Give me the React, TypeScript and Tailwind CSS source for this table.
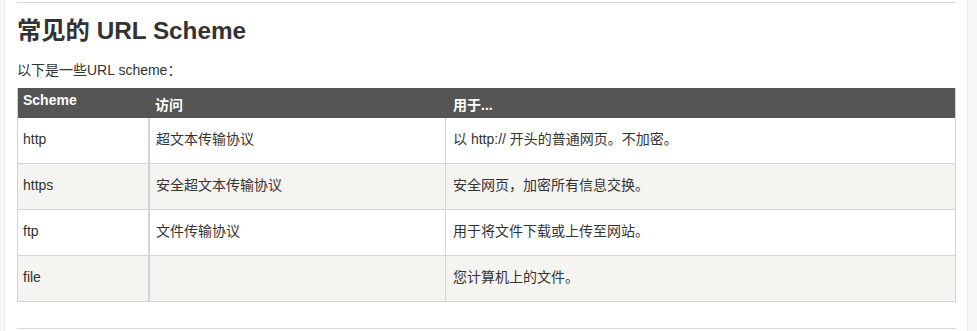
import React from "react";

const rows = [
  { s: "http", a: "超文本传输协议", u: "以 http:// 开头的普通网页。不加密。" },
  { s: "https", a: "安全超文本传输协议", u: "安全网页，加密所有信息交换。" },
  { s: "ftp", a: "文件传输协议", u: "用于将文件下载或上传至网站。" },
  { s: "file", a: "", u: "您计算机上的文件。" },
];

export default function App() {
  return (
    <div
      className="flex w-[977px] h-[331px] bg-white text-[#333] overflow-hidden"
      style={{ fontFamily: '"Liberation Sans", "Noto Sans CJK SC", sans-serif' }}
    >
      <div className="w-[5px] shrink-0 bg-[#f6f6f6] border-r border-[#ececec]" />
      <div className="w-[939px] ml-[12px] shrink-0 flex flex-col">
        <div className="h-[2px]" />
        <div className="h-px bg-[#d9d9d9]" />
        <h2 className="mt-[14px] text-[24.3px] leading-[28px] font-bold text-[#333]">常见的 URL Scheme</h2>
        <p className="mt-[15px] text-[14px] leading-[20px]">以下是一些URL scheme：</p>
        <div className="mt-[8px] border-l border-r border-b border-[#d4d4d4]">
          <div className="flex h-[30px] bg-[#555] text-white text-[14px] font-bold">
            <div className="w-[132px] pl-[5px] pt-[2px] leading-[20px]">Scheme</div>
            <div className="w-[297px] pl-[5px] pt-[7px] leading-[20px]">访问</div>
            <div className="flex-1 pl-[6px] pt-[7px] leading-[20px]">用于...</div>
          </div>
          {rows.map((r, i) => (
            <div
              key={r.s}
              className={`flex text-[14px] ${i > 0 ? "h-[46px] border-t border-[#d4d4d4]" : "h-[45px]"} ${
                i % 2 === 1 ? "bg-[#f6f4f0]" : "bg-white"
              }`}
            >
              <div className="w-[132px] pl-[5px] pt-[11px] leading-[20px] border-r-2 border-[#d4d4d4]">{r.s}</div>
              <div className="w-[296px] pl-[6px] pt-[11px] leading-[20px] border-r border-[#d4d4d4]">{r.a}</div>
              <div className="flex-1 pl-[7px] pt-[11px] leading-[20px]">{r.u}</div>
            </div>
          ))}
        </div>
        <div className="mt-[26px] h-px bg-[#d9d9d9]" />
      </div>
      <div className="flex-1" />
      <div className="w-[10px] shrink-0 bg-[#f6f6f6] border-l border-[#ececec]" />
    </div>
  );
}
